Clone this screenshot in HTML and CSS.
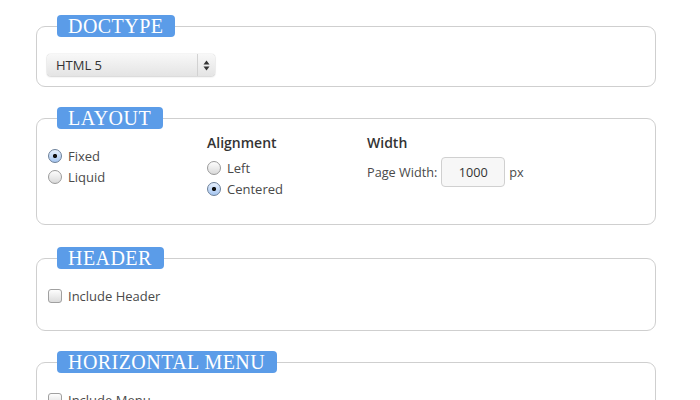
FILE: index.html
```html
<!DOCTYPE html>
<html>
<head>
<meta charset="utf-8">
<link rel="stylesheet" href="styles.css">
</head>
<body>
<div class="page">
  <fieldset class="box box-doctype">
    <legend class="legend">DOCTYPE</legend>
    <div class="select">
      <span class="select-value">HTML 5</span>
      <span class="select-arrows">
        <svg width="7" height="11" viewBox="0 0 7 11"><path d="M3.5 0.5 L6.5 4.5 L0.5 4.5 Z" fill="#333"/><path d="M3.5 10.5 L6.5 6.5 L0.5 6.5 Z" fill="#333"/></svg>
      </span>
    </div>
  </fieldset>

  <fieldset class="box box-layout">
    <legend class="legend">LAYOUT</legend>
    <div class="cols">
      <div class="col col-first">
        <label class="opt"><span class="radio checked"></span>Fixed</label>
        <label class="opt"><span class="radio"></span>Liquid</label>
      </div>
      <div class="col">
        <div class="col-title">Alignment</div>
        <label class="opt"><span class="radio"></span>Left</label>
        <label class="opt"><span class="radio checked"></span>Centered</label>
      </div>
      <div class="col">
        <div class="col-title">Width</div>
        <div class="width-row">
          <span>Page Width:</span>
          <span class="num-input">1000</span>
          <span>px</span>
        </div>
      </div>
    </div>
  </fieldset>

  <fieldset class="box box-header">
    <legend class="legend">HEADER</legend>
    <label class="opt"><span class="check"></span>Include Header</label>
  </fieldset>

  <fieldset class="box box-header">
    <legend class="legend">HORIZONTAL MENU</legend>
    <label class="opt"><span class="check"></span>Include Menu</label>
  </fieldset>
</div>
</body>
</html>
```

FILE: styles.css
```css
html, body {
  margin: 0;
  padding: 0;
  background: #fff;
}

body {
  font-family: "Open Sans", "Liberation Sans", sans-serif;
  font-size: 12.5px;
  color: #4a4a4a;
}

.page {
  padding: 15px 0 0 36px;
  width: 620px;
}

.box {
  margin: 0 0 20px 0;
  padding: 0 11px;
  border: 1px solid #cfcfcf;
  border-radius: 9px;
  min-width: 0;
}

.box-layout {
  margin-bottom: 22px;
}

.legend {
  margin-left: 9px;
  padding: 0 12px 0 11px;
  height: 22px;
  line-height: 23px;
  background: #5b9ce8;
  border-radius: 4px;
  color: #fff;
  font-family: "Liberation Serif", serif;
  font-size: 20px;
  letter-spacing: 0.45px;
}

/* select */
.box-doctype {
  padding-bottom: 10px;
}

.select {
  margin-top: 17px;
  width: 168px;
  height: 22px;
  display: flex;
  border-radius: 4px;
  background: linear-gradient(#f8f8f8, #e4e4e4);
  box-shadow: 0 0 1px rgba(0,0,0,0.35), 0 1px 2px rgba(0,0,0,0.14);
  box-sizing: border-box;
  margin-left: -1px;
}

.select-value {
  flex: 1;
  padding-left: 9px;
  line-height: 22px;
  color: #333;
  font-size: 13px;
  border-right: 1px solid #d2d2d2;
}

.select-arrows {
  width: 17px;
  display: flex;
  align-items: center;
  justify-content: center;
}

/* layout */
.box-layout {
  padding-top: 4px;
  padding-bottom: 25px;
}

.cols {
  display: grid;
  grid-template-columns: 159px 160px 1fr;
}

.col-first {
  padding-top: 12px;
}

.col-title {
  font-size: 14px;
  font-weight: 600;
  color: #333;
  line-height: 20px;
  margin-bottom: 4px;
}

.opt {
  display: flex;
  align-items: center;
  height: 21px;
  gap: 6px;
  font-size: 13px;
}

.radio {
  width: 14px;
  height: 14px;
  border-radius: 50%;
  border: 1px solid #9a9a9a;
  background: linear-gradient(#fdfdfd, #dadada);
  box-sizing: border-box;
  flex: none;
}

.radio.checked {
  border-color: #6b7f99;
  background: radial-gradient(circle at center, #111 0 1.8px, transparent 2.4px), linear-gradient(#e6f0fd, #a6c6f0);
}

.check {
  width: 14px;
  height: 14px;
  border-radius: 3px;
  border: 1px solid #a0a0a0;
  background: linear-gradient(#fdfdfd, #dcdcdc);
  box-sizing: border-box;
  flex: none;
}

.width-row {
  display: flex;
  align-items: center;
  gap: 4px;
  font-size: 12.7px;
}

.num-input {
  width: 64px;
  height: 30px;
  box-sizing: border-box;
  border: 1px solid #d0d0d0;
  border-radius: 4px;
  background: #f7f7f7;
  display: flex;
  align-items: center;
  justify-content: center;
  color: #333;
}

/* header */
.box-header {
  padding-top: 16px;
  padding-bottom: 24px;
}
```
